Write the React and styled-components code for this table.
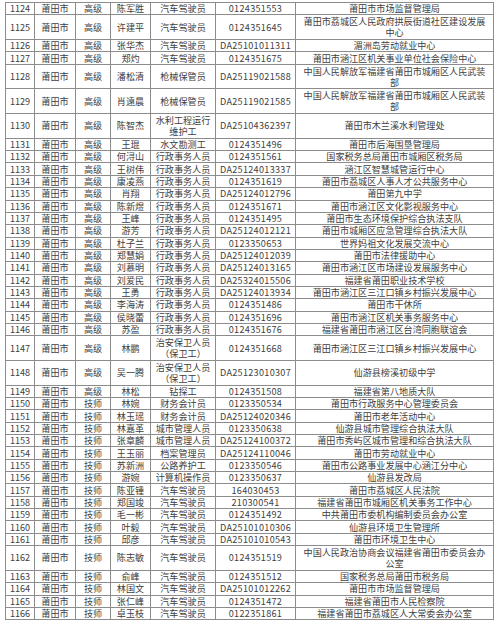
import React from "react";
import styled, { createGlobalStyle } from "styled-components";

const Global = createGlobalStyle`
  html, body { margin: 0; padding: 0; background: #fff; }
  body { font-family: "Noto Sans CJK SC", "Liberation Sans", sans-serif; }
`;

const Page = styled.div`
  padding: 2px 0 0 5px;
  width: 500px;
  height: 631px;
  box-sizing: border-box;
  overflow: hidden;
`;

const Table = styled.table`
  width: 488px;
  table-layout: fixed;
  border-collapse: separate;
  border-spacing: 0;
  border-top: 1px solid #8c8c8c;
  border-left: 1px solid #8c8c8c;
  color: #404040;
  font-size: 9.1px;
  line-height: 11px;
`;

const Row = styled.tr`
  height: ${(p) => (p.$tall ? 24.7 : 12.35)}px;
`;

const Cell = styled.td`
  box-sizing: border-box;
  border-right: 1px solid #8c8c8c;
  border-bottom: 1px solid #8c8c8c;
  padding: 0 ${(p) => p.$pad || 1}px;
  text-align: center;
  vertical-align: middle;
  white-space: ${(p) => (p.$nowrap ? "nowrap" : "normal")};
  letter-spacing: ${(p) => (p.$num ? "0.3px" : "0")};
`;

const cols = [29, 41, 35, 40, 65, 80, 198];

const rows = [
  ["1124", "高级", "陈军胜", "汽车驾驶员", "0124351553", "莆田市市场监督管理局"],
  ["1125", "高级", "许建平", "汽车驾驶员", "0124351645", "莆田市荔城区人民政府拱辰街道社区建设发展中心", true],
  ["1126", "高级", "张华杰", "汽车驾驶员", "DA25101011311", "湄洲岛劳动就业中心"],
  ["1127", "高级", "郑灼", "汽车驾驶员", "0124351675", "莆田市涵江区机关事业单位社会保险中心"],
  ["1128", "高级", "潘松清", "枪械保管员", "DA25119021588", "中国人民解放军福建省莆田市城厢区人民武装部", true],
  ["1129", "高级", "肖遠晨", "枪械保管员", "DA25119021585", "中国人民解放军福建省莆田市城厢区人民武装部", true],
  ["1130", "高级", "陈智杰", "水利工程运行维护工", "DA25104362397", "莆田市木兰溪水利管理处", true],
  ["1131", "高级", "王琨", "水文勘测工", "0124351496", "莆田市后海围垦管理局"],
  ["1132", "高级", "何浔山", "行政事务人员", "0124351561", "国家税务总局莆田市城厢区税务局"],
  ["1133", "高级", "王树伟", "行政事务人员", "DA25124013337", "涵江区智慧城管运行中心"],
  ["1134", "高级", "康凌燕", "行政事务人员", "0124351619", "莆田市荔城区人事人才公共服务中心"],
  ["1135", "高级", "肖翔", "行政事务人员", "DA25124012796", "莆田第九中学"],
  ["1136", "高级", "陈新煜", "行政事务人员", "0124351671", "莆田市涵江区文化影视服务中心"],
  ["1137", "高级", "王峰", "行政事务人员", "0124351495", "莆田市生态环境保护综合执法支队"],
  ["1138", "高级", "游芳", "行政事务人员", "DA25124012121", "莆田市城厢区应急管理综合执法大队"],
  ["1139", "高级", "杜子兰", "行政事务人员", "0123350653", "世界妈祖文化发展交流中心"],
  ["1140", "高级", "郑慧娟", "行政事务人员", "DA25124012039", "莆田市法律援助中心"],
  ["1141", "高级", "刘慕明", "行政事务人员", "DA25124013165", "莆田市涵江区市场建设发展服务中心"],
  ["1142", "高级", "刘爱民", "行政事务人员", "DA25324015506", "福建省莆田职业技术学校"],
  ["1143", "高级", "王勇", "行政事务人员", "DA25124013934", "莆田市涵江区三江口镇乡村振兴发展中心"],
  ["1144", "高级", "李海涛", "行政事务人员", "0124351486", "莆田市干休所"],
  ["1145", "高级", "侯晓蕾", "行政事务人员", "0124351696", "莆田市涵江区机关事务服务中心"],
  ["1146", "高级", "苏盈", "行政事务人员", "0124351676", "福建省莆田市涵江区台湾同胞联谊会"],
  ["1147", "高级", "林鹏", "治安保卫人员（保卫工）", "0124351668", "莆田市涵江区三江口镇乡村振兴发展中心", true],
  ["1148", "高级", "吴一腾", "治安保卫人员（保卫工）", "DA25123010307", "仙游县榜溪初级中学", true],
  ["1149", "高级", "林松", "钻探工", "0124351508", "福建省第八地质大队"],
  ["1150", "技师", "林婉", "财务会计员", "0123350534", "莆田市行政服务中心管理委员会"],
  ["1151", "技师", "林玉瑶", "财务会计员", "DA25124020346", "莆田市老年活动中心"],
  ["1152", "技师", "林嘉革", "城市管理人员", "0123350638", "仙游县城市管理综合执法大队"],
  ["1153", "技师", "张章麟", "城市管理人员", "DA25124100372", "莆田市秀屿区城市管理和综合执法大队"],
  ["1154", "技师", "王玉丽", "档案管理员", "DA25124110046", "莆田市劳动就业中心"],
  ["1155", "技师", "苏新洲", "公路养护工", "0123350546", "莆田市公路事业发展中心涵江分中心"],
  ["1156", "技师", "游婉", "计算机操作员", "0123350637", "仙游县发改局"],
  ["1157", "技师", "陈亚锺", "汽车驾驶员", "164030453", "莆田市荔城区人民法院"],
  ["1158", "技师", "郑国竣", "汽车驾驶员", "210300541", "福建省莆田市城厢区机关事务工作中心"],
  ["1159", "技师", "毛一彬", "汽车驾驶员", "0124351492", "中共莆田市委机构编制委员会办公室"],
  ["1160", "技师", "叶毅", "汽车驾驶员", "DA25101010306", "仙游县环境卫生管理所"],
  ["1161", "技师", "邱彦", "汽车驾驶员", "DA25101010543", "莆田市环境卫生中心"],
  ["1162", "技师", "陈志敏", "汽车驾驶员", "0124351519", "中国人民政治协商会议福建省莆田市委员会办公室", true],
  ["1163", "技师", "俞峰", "汽车驾驶员", "0124351512", "国家税务总局莆田市税务局"],
  ["1164", "技师", "林国文", "汽车驾驶员", "DA25101012262", "莆田市市场监督管理局"],
  ["1165", "技师", "张仁峰", "汽车驾驶员", "0124351472", "福建省莆田市人民检察院"],
  ["1166", "技师", "卓玉枝", "汽车驾驶员", "0122351861", "福建省莆田市荔城区人大常委会办公室"],
];

export default function App() {
  return (
    <Page>
      <Global />
      <Table>
        <colgroup>
          {cols.map((w, i) => (
            <col key={i} style={{ width: w }} />
          ))}
        </colgroup>
        <tbody>
          {rows.map(([no, level, name, job, cert, unit, tall]) => (
            <Row key={no} $tall={tall}>
              <Cell $nowrap>{no}</Cell>
              <Cell $nowrap>莆田市</Cell>
              <Cell $nowrap>{level}</Cell>
              <Cell $nowrap>{name}</Cell>
              <Cell $pad={3}>{job}</Cell>
              <Cell $nowrap $num>{cert}</Cell>
              <Cell $pad={5}>{unit}</Cell>
            </Row>
          ))}
        </tbody>
      </Table>
    </Page>
  );
}
